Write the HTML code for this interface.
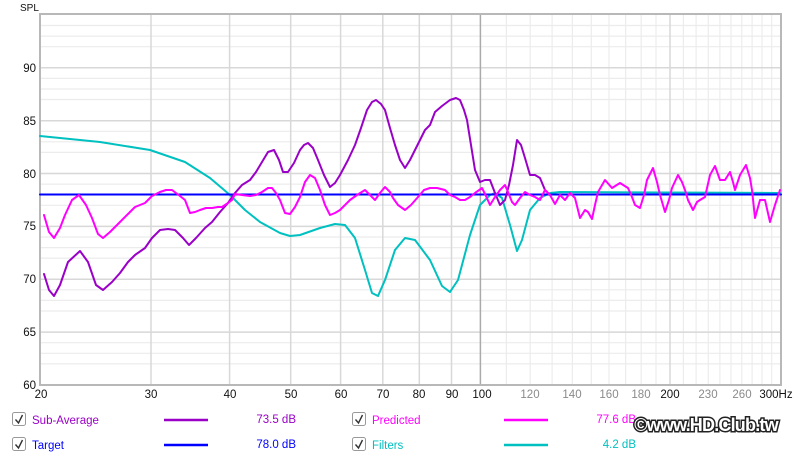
<!DOCTYPE html>
<html><head><meta charset="utf-8"><style>
body{margin:0;background:#fff;width:800px;height:460px;overflow:hidden;font-family:"Liberation Sans",sans-serif}
svg{position:absolute;left:0;top:0}
</style></head><body>
<svg width="800" height="460" viewBox="0 0 800 460" font-family="Liberation Sans, sans-serif">
<g stroke="#ececec" stroke-width="1.2">
<line x1="40" x2="781" y1="363.9" y2="363.9"/><line x1="40" x2="781" y1="353.3" y2="353.3"/><line x1="40" x2="781" y1="342.7" y2="342.7"/><line x1="40" x2="781" y1="332.1" y2="332.1"/>
<line x1="40" x2="781" y1="311" y2="311"/><line x1="40" x2="781" y1="300.4" y2="300.4"/><line x1="40" x2="781" y1="289.8" y2="289.8"/><line x1="40" x2="781" y1="279.3" y2="279.3"/>
<line x1="40" x2="781" y1="258.1" y2="258.1"/><line x1="40" x2="781" y1="247.6" y2="247.6"/><line x1="40" x2="781" y1="237" y2="237"/><line x1="40" x2="781" y1="226.4" y2="226.4"/>
<line x1="40" x2="781" y1="205.3" y2="205.3"/><line x1="40" x2="781" y1="194.7" y2="194.7"/><line x1="40" x2="781" y1="184.1" y2="184.1"/><line x1="40" x2="781" y1="173.5" y2="173.5"/>
<line x1="40" x2="781" y1="152.4" y2="152.4"/><line x1="40" x2="781" y1="141.8" y2="141.8"/><line x1="40" x2="781" y1="131.3" y2="131.3"/><line x1="40" x2="781" y1="120.7" y2="120.7"/>
<line x1="40" x2="781" y1="99.5" y2="99.5"/><line x1="40" x2="781" y1="89" y2="89"/><line x1="40" x2="781" y1="78.4" y2="78.4"/><line x1="40" x2="781" y1="67.8" y2="67.8"/>
<line x1="40" x2="781" y1="46.7" y2="46.7"/><line x1="40" x2="781" y1="36.1" y2="36.1"/><line x1="40" x2="781" y1="25.5" y2="25.5"/>
<line y1="14" y2="385" x1="506.4" x2="506.4"/><line y1="14" y2="385" x1="530.2" x2="530.2"/><line y1="14" y2="385" x1="552.1" x2="552.1"/><line y1="14" y2="385" x1="572.4" x2="572.4"/><line y1="14" y2="385" x1="591.3" x2="591.3"/><line y1="14" y2="385" x1="609" x2="609"/><line y1="14" y2="385" x1="625.6" x2="625.6"/><line y1="14" y2="385" x1="641.2" x2="641.2"/><line y1="14" y2="385" x1="656" x2="656"/><line y1="14" y2="385" x1="683.4" x2="683.4"/><line y1="14" y2="385" x1="696.1" x2="696.1"/><line y1="14" y2="385" x1="708.3" x2="708.3"/><line y1="14" y2="385" x1="719.9" x2="719.9"/><line y1="14" y2="385" x1="731" x2="731"/><line y1="14" y2="385" x1="741.8" x2="741.8"/><line y1="14" y2="385" x1="752.1" x2="752.1"/><line y1="14" y2="385" x1="762" x2="762"/><line y1="14" y2="385" x1="771.7" x2="771.7"/>
</g>
<g stroke="#d8d8d8" stroke-width="1.5">
<line x1="40" x2="781" y1="332.1" y2="332.1"/><line x1="40" x2="781" y1="279.3" y2="279.3"/><line x1="40" x2="781" y1="226.4" y2="226.4"/><line x1="40" x2="781" y1="173.5" y2="173.5"/><line x1="40" x2="781" y1="120.7" y2="120.7"/><line x1="40" x2="781" y1="67.8" y2="67.8"/>
<line y1="14" y2="385" x1="151" x2="151"/><line y1="14" y2="385" x1="229.6" x2="229.6"/><line y1="14" y2="385" x1="290.7" x2="290.7"/><line y1="14" y2="385" x1="340.6" x2="340.6"/><line y1="14" y2="385" x1="382.8" x2="382.8"/><line y1="14" y2="385" x1="419.3" x2="419.3"/><line y1="14" y2="385" x1="451.5" x2="451.5"/><line y1="14" y2="385" x1="670" x2="670"/>
</g>
<line y1="14" y2="385" x1="480.4" x2="480.4" stroke="#aaa" stroke-width="1.5"/>
<rect x="40" y="14" width="741" height="371" fill="none" stroke="#b8b8b8" stroke-width="2"/>
<g fill="none" stroke-width="2" stroke-linejoin="round" stroke-linecap="round">
<polyline stroke="#00c0c0" points="40,136 100,142 150,150 185,162 210,178 230,195 245,210 260,222 280,233 290,236 300,235 320,228 335,224 345,225 355,238 365,270 372,293 378,296 385,280 395,250 405,238 415,240 430,260 442,286 450,292 458,280 470,235 480,205 490,195 495,193 502,198 510,225 517,251 522,240 530,210 540,198 550,193 560,192 780,193"/>
<line x1="40" x2="781" y1="194.5" y2="194.5" stroke="#0000ff"/>
<polyline stroke="#9a00c8" points="44,274 49,290 54,296 60,285 68,262 80,251 88,262 96,285 103,290 112,282 120,273 128,262 135,255 145,248 152,238 160,230 168,229 175,230 183,238 189,245 196,238 205,228 212,222 220,212 228,203 235,193 242,185 250,180 256,172 262,162 268,152 274,150 279,160 283,172 288,172 294,163 300,150 304,145 308,143 313,148 318,160 324,175 330,187 335,183 340,175 348,160 355,145 361,128 367,110 372,102 376,100 381,104 385,110 390,128 395,145 400,160 405,168 410,160 415,150 420,140 425,130 430,125 435,112 442,106 450,100 456,98 460,100 464,110 467,120 471,145 475,170 480,182 485,180 490,180 495,193 500,205 505,200 509,185 513,165 517,140 521,145 525,158 530,175 535,175 540,178 545,190 550,195"/>
<polyline stroke="#ff00ff" points="44,215 49,232 54,238 60,228 65,215 72,200 79,195 86,205 92,218 98,234 103,238 110,232 120,222 128,214 135,207 140,205 145,203 152,196 160,192 166,190 172,190 180,196 185,200 190,213 195,212 200,210 206,208 212,208 218,207 222,207 228,203 232,200 235,194 242,195 250,196 256,195 262,192 268,188 272,188 276,193 280,200 285,213 290,214 295,207 300,197 305,182 310,175 315,178 320,190 325,205 330,215 335,213 340,210 345,205 350,200 357,195 365,190 370,195 375,200 380,193 385,187 390,192 393,198 398,205 405,210 411,205 418,197 424,190 430,188 437,188 445,190 450,195 455,197 460,200 465,200 470,197 475,193 482,188 486,196 490,205 495,197 500,190 505,185 508,192 512,202 515,205 520,198 525,192 530,195 535,197 540,200 545,190 550,195 555,204 560,195 565,200 570,193 575,198 580,218 585,210 588,212 592,219 595,205 598,192 605,180 612,188 620,183 628,188 632,197 635,205 640,208 644,195 647,180 653,168 657,182 660,195 665,212 669,200 672,188 678,175 682,182 685,190 688,200 693,210 697,202 700,200 705,197 710,175 715,166 720,180 725,180 730,172 733,182 735,190 740,175 746,165 750,178 752,190 755,218 760,200 765,200 770,222 775,205 780,190"/>
</g>
<g font-size="11.5" fill="#111" text-anchor="end">
<text x="36" y="389">60</text><text x="36" y="336">65</text><text x="36" y="283">70</text><text x="36" y="230">75</text><text x="36" y="178">80</text><text x="36" y="125">85</text><text x="36" y="72">90</text>
</g>
<text x="20" y="11" font-size="10" fill="#111">SPL</text>
<g font-size="11.5" text-anchor="middle" fill="#111">
<text x="41" y="398">20</text><text x="151" y="398">30</text><text x="230" y="398">40</text><text x="291" y="398">50</text><text x="341" y="398">60</text><text x="383" y="398">70</text><text x="419" y="398">80</text><text x="452" y="398">90</text><text x="482" y="398">100</text><text x="670" y="398">200</text>
<g fill="#8a8a8a"><text x="530" y="398">120</text><text x="572" y="398">140</text><text x="609" y="398">160</text><text x="641" y="398">180</text><text x="708" y="398">230</text><text x="742" y="398">260</text></g>
<text x="776" y="398">300Hz</text>
</g>
<g fill="#fff" stroke="#999" stroke-width="1">
<rect x="12.5" y="412.5" width="13" height="13" rx="2"/><rect x="12.5" y="437.5" width="13" height="13" rx="2"/>
<rect x="352.5" y="412.5" width="13" height="13" rx="2"/><rect x="352.5" y="437.5" width="13" height="13" rx="2"/>
</g>
<g fill="none" stroke="#333" stroke-width="1.4">
<path d="M15.5 419.5 L18.5 423 L22.5 415"/><path d="M15.5 444.5 L18.5 448 L22.5 440"/>
<path d="M355.5 419.5 L358.5 423 L362.5 415"/><path d="M355.5 444.5 L358.5 448 L362.5 440"/>
</g>
<g font-size="11.5">
<text x="32" y="424" fill="#9a00c8">Sub-Average</text><text x="32" y="449" fill="#0000ff">Target</text>
<text x="372" y="424" fill="#ff00ff">Predicted</text><text x="372" y="449" fill="#00c0c0">Filters</text>
<text x="296" y="423" fill="#9a00c8" text-anchor="end">73.5 dB</text><text x="296" y="448" fill="#0000ff" text-anchor="end">78.0 dB</text>
<text x="636" y="423" fill="#ff00ff" text-anchor="end">77.6 dB</text><text x="636" y="448" fill="#00c0c0" text-anchor="end">4.2 dB</text>
</g>
<g stroke-width="2.5">
<line x1="164" x2="208" y1="420" y2="420" stroke="#9a00c8"/><line x1="164" x2="208" y1="445" y2="445" stroke="#0000ff"/>
<line x1="504" x2="548" y1="420" y2="420" stroke="#ff00ff"/><line x1="504" x2="548" y1="445" y2="445" stroke="#00c0c0"/>
</g>
<text x="706" y="431" font-size="18" font-weight="bold" text-anchor="middle" fill="#fff" stroke="#222" stroke-width="3" paint-order="stroke" letter-spacing="-0.8">©www.HD.Club.tw</text>
</svg>
</body></html>
